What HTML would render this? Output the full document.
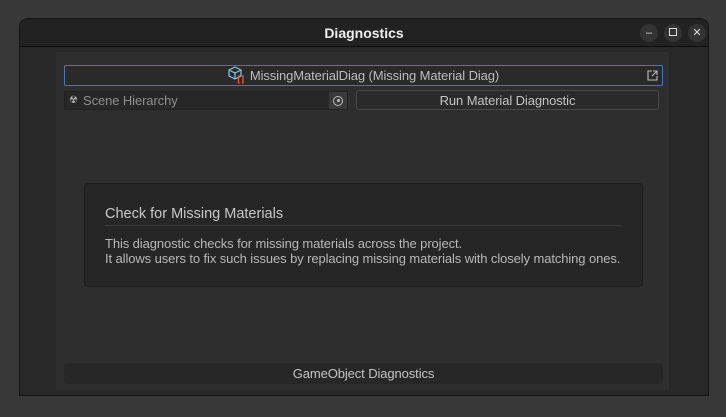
<!DOCTYPE html><html><head><style>
body{margin:0;width:726px;height:417px;background:#383838;font-family:"Liberation Sans",sans-serif;position:relative;overflow:hidden}
.a{position:absolute;box-sizing:border-box}
.win{left:19px;top:18px;width:690px;height:378px;background:#282828;border:1px solid #151515;border-radius:9px 9px 0 0;overflow:hidden}
.tb{left:0;top:0;width:688px;height:28px;background:#222;border-bottom:1px solid #0e0e0e;color:#eee;font-weight:bold;font-size:14px;text-align:center;line-height:28px}
.cb{top:5px;width:18px;height:18px;border-radius:50%;background:#333;color:#ddd;font-size:11px;text-align:center;line-height:18px}
.txt{color:#c4c4c4;font-size:13px;letter-spacing:-0.1px}
</style></head><body>
<div class="a win">
 <div class="a tb">Diagnostics</div>
 <div class="a cb" style="left:620px">&#8211;</div>
 <div class="a cb" style="left:644px"><div style="width:8px;height:8px;border:1.5px solid #ddd;margin:4px auto 0;box-sizing:border-box"></div></div>
 <div class="a cb" style="left:668px">✕</div>
</div>
<div class="a" style="left:56px;top:52px;width:613px;height:338px;background:#2e2e2e"></div>
<div class="a txt" style="left:64px;top:65px;width:599px;height:21px;border:1px solid #3d7ac0;border-radius:2px;background:#2a2a2a;text-align:center;line-height:19px;color:#bdbdbd">
<svg width="16" height="18" viewBox="0 0 16 18" style="vertical-align:-4px;margin-right:6px"><path d="M7 1 L13 4 V10 L7 13 L1 10 V4 Z M1 4 L7 7 L13 4 M7 7 V13" stroke="#7ec8ef" fill="none" stroke-width="1.2"/><path d="M11.5 10 H10.5 V17 H11.5 M14 10 H15 V17 H14" stroke="#f06030" fill="none" stroke-width="1.2"/></svg>MissingMaterialDiag (Missing Material Diag)
<svg width="11" height="11" viewBox="0 0 11 11" style="position:absolute;right:4px;top:4px"><path d="M5 1H1V10H10V6M6 1H10V5M10 1L5 6" stroke="#bbb" fill="none" stroke-width="1.1"/></svg></div>
<div class="a txt" style="left:64px;top:91px;width:284px;height:19px;background:#272727;border:1px solid #222;border-radius:2px;line-height:18px;padding-left:18px;color:#8e8e8e">Scene Hierarchy
<span style="position:absolute;left:4px;top:0;color:#bbb;font-size:10px">☢</span>
<div class="a" style="right:0;top:0;width:18px;height:17px;background:#3a3a3a"><div style="width:8px;height:8px;border:1.2px solid #bbb;border-radius:50%;margin:3.5px auto;position:relative"><div style="width:3px;height:3px;background:#bbb;border-radius:50%;position:absolute;left:2.5px;top:2.5px"></div></div></div></div>
<div class="a txt" style="left:356px;top:90px;width:303px;height:20px;background:#2a2a2a;border:1px solid #4a4a4a;border-radius:3px;text-align:center;line-height:19px">Run Material Diagnostic</div>
<div class="a" style="left:84px;top:183px;width:559px;height:104px;background:#262626;border:1px solid #1e1e1e;border-radius:4px">
 <div class="a" style="left:20px;top:22px;font-size:14.5px;color:#c8c8c8">Check for Missing Materials</div>
 <div class="a" style="left:20px;top:41px;width:517px;height:1px;background:#3a3a3a"></div>
 <div class="a txt" style="left:20px;top:52px;line-height:15px;color:#b8b8b8;font-size:13px;letter-spacing:-0.1px;white-space:nowrap">This diagnostic checks for missing materials across the project.<br>It allows users to fix such issues by replacing missing materials with closely matching ones.</div>
</div>
<div class="a txt" style="left:64px;top:363px;width:599px;height:21px;background:#272727;border-radius:3px;text-align:center;line-height:21px">GameObject Diagnostics</div>
</body></html>
